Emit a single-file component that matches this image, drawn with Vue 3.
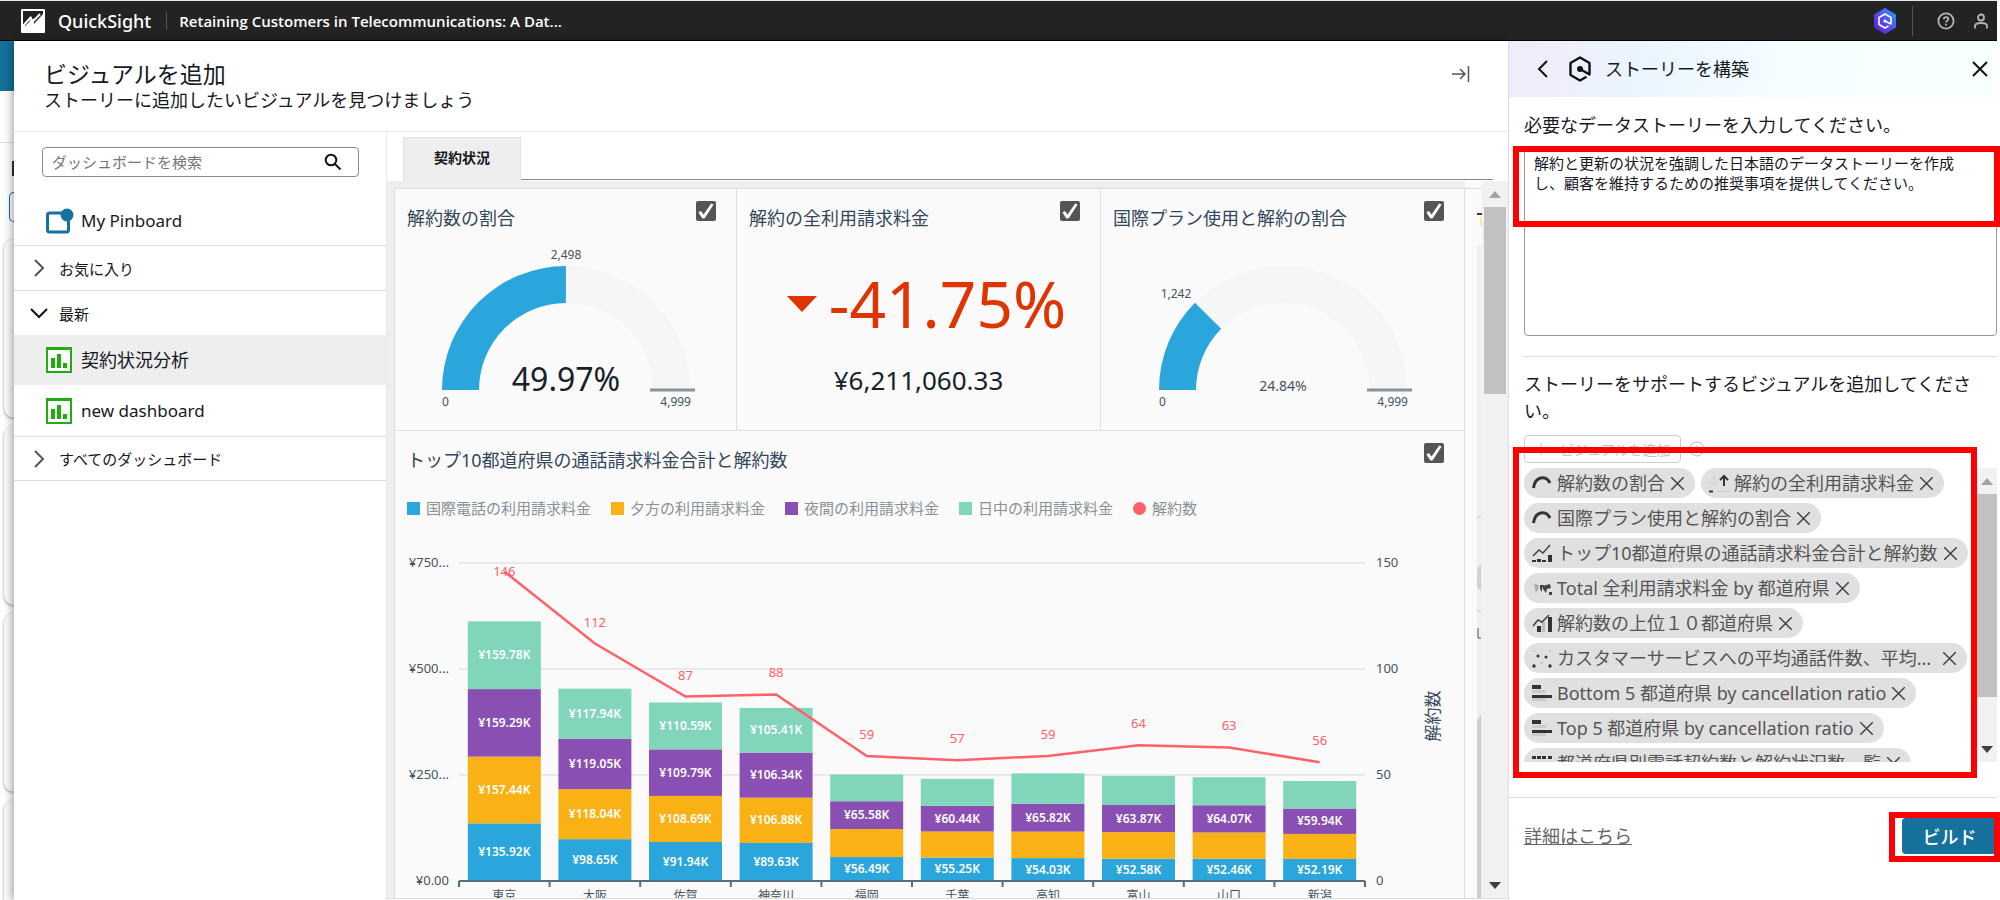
<script setup>
import { ref } from 'vue'

const prompt = ref('解約と更新の状況を強調した日本語のデータストーリーを作成し、顧客を維持するための推奨事項を提供してください。')
const search = ref('')
const picked = ref([true, true, true, true])

const colors = { intl: '#2aa6dd', evening: '#fab116', night: '#8a4fb3', day: '#80d5ba', line: '#ff6169' }

const legend = [
  { label: '国際電話の利用請求料金', color: 'intl' },
  { label: '夕方の利用請求料金', color: 'evening' },
  { label: '夜間の利用請求料金', color: 'night' },
  { label: '日中の利用請求料金', color: 'day' },
  { label: '解約数', color: 'line', round: true },
]

// Charges are in thousands of yen: international, evening, night, daytime.
const rows = [
  { name: '東京', v: [135.92, 157.44, 159.29, 159.78], churn: 146 },
  { name: '大阪', v: [98.65, 118.04, 119.05, 117.94], churn: 112 },
  { name: '佐賀', v: [91.94, 108.69, 109.79, 110.59], churn: 87 },
  { name: '神奈川', v: [89.63, 106.88, 106.34, 105.41], churn: 88 },
  { name: '福岡', v: [56.49, 66.1, 65.58, 63.2], churn: 59 },
  { name: '千葉', v: [55.25, 61.5, 60.44, 63.8], churn: 57 },
  { name: '高知', v: [54.03, 62.4, 65.82, 71.6], churn: 59 },
  { name: '富山', v: [52.58, 62.8, 63.87, 68.7], churn: 64 },
  { name: '山口', v: [52.46, 62.1, 64.07, 66.2], churn: 63 },
  { name: '新潟', v: [52.19, 58.9, 59.94, 64.8], churn: 56 },
]

const plot = { left: 64, right: 970, zero: 341, top: 23 }
const step = (plot.right - plot.left) / rows.length
const perK = (plot.zero - plot.top) / 750
const perChurn = (plot.zero - plot.top) / 150
const barWidth = 73
const keys = ['intl', 'evening', 'night', 'day']

const bars = rows.map((row, i) => {
  const cx = plot.left + step * (i + 0.5)
  let base = plot.zero
  const parts = row.v.map((value, k) => {
    const h = value * perK
    base -= h
    const shown = i < 4 || k === 0 || k === 2
    return { y: base, h, fill: colors[keys[k]], text: shown ? '¥' + value.toFixed(2) + 'K' : '' }
  })
  const py = plot.zero - row.churn * perChurn
  return { name: row.name, churn: row.churn, cx, parts, py, ly: i === 0 ? py + 5 : py - 17 }
})
const linePoints = bars.map((b) => b.cx + ',' + b.py).join(' ')
const ticks = rows.map((_, i) => plot.left + step * i).concat(plot.right)
const grid = [
  { left: '¥750...', right: '150', y: plot.top },
  { left: '¥500...', right: '100', y: plot.zero - 250 * 2 * perK },
  { left: '¥250...', right: '50', y: plot.zero - 250 * perK },
  { left: '¥0.00', right: '0', y: plot.zero },
]

// Ring segment of a half-circle gauge, from one fraction of the sweep to another.
function arc(from, to) {
  const cx = 135, cy = 150, ro = 124, ri = 87
  const pt = (r, f) => (cx - r * Math.cos(Math.PI * f)).toFixed(1) + ' ' + (cy - r * Math.sin(Math.PI * f)).toFixed(1)
  return `M${pt(ro, from)}A${ro} ${ro} 0 0 1 ${pt(ro, to)}L${pt(ri, to)}A${ri} ${ri} 0 0 0 ${pt(ri, from)}Z`
}

const cards = [
  { title: '解約数の割合', fraction: 0.4997, value: '2,498', vx: 135, vy: 19, percent: '49.97%', size: 'big' },
  { title: '解約の全利用請求料金' },
  { title: '国際プラン使用と解約の割合', fraction: 0.2484, value: '1,242', vx: 28, vy: 58, percent: '24.84%', size: 'small' },
]

const chips = [
  { icon: 'gauge', label: '解約数の割合' },
  { icon: 'kpi', label: '解約の全利用請求料金' },
  { icon: 'gauge', label: '国際プラン使用と解約の割合' },
  { icon: 'combo', label: 'トップ10都道府県の通話請求料金合計と解約数' },
  { icon: 'map', label: 'Total 全利用請求料金 by 都道府県' },
  { icon: 'bars', label: '解約数の上位１０都道府県' },
  { icon: 'scatter', label: 'カスタマーサービスへの平均通話件数、平均...', cut: true },
  { icon: 'hbar', label: 'Bottom 5 都道府県 by cancellation ratio' },
  { icon: 'hbar', label: 'Top 5 都道府県 by cancellation ratio' },
  { icon: 'table', label: '都道府県別電話契約数と解約状況数一覧' },
]
</script>

<template>
  <div class="app">
    <header class="topbar">
      <svg class="logo" viewBox="0 0 24 24" aria-hidden="true">
        <rect width="24" height="24" rx="1" fill="#fff" />
        <path d="M2 2H22V5L13 15L12.500 9L4 17H2Z" fill="#232323" />
        <path d="M2 17L10 8L9.500 15L19 5" fill="none" stroke="#fff" stroke-width="2" stroke-linejoin="bevel" />
      </svg>
      <span class="brand">QuickSight</span>
      <span class="rule"></span>
      <h1 class="doc">Retaining Customers in Telecommunications: A Dat...</h1>
      <button class="icon-btn q" aria-label="Amazon Q">
        <svg width="24" height="26" viewBox="0 0 24 26">
          <defs>
            <linearGradient id="qg" x1="0" y1="1" x2="1" y2="0">
              <stop offset="0" stop-color="#5a1fc4" />
              <stop offset="0.5" stop-color="#5b4bf0" />
              <stop offset="1" stop-color="#1aa0ff" />
            </linearGradient>
          </defs>
          <path d="M12 1L22 7V19L12 25L2 19V7Z" fill="url(#qg)" stroke="url(#qg)" stroke-width="2" stroke-linejoin="round" />
          <path d="M12 13L18 16V9.500L12 6L6 9.500V16.500L12 20L15.500 18" fill="none" stroke="#fff" stroke-width="1.600" stroke-linejoin="round" />
          <circle cx="12" cy="13" r="1.600" fill="#fff" />
        </svg>
      </button>
      <span class="rule tall"></span>
      <button class="icon-btn help" aria-label="Help">
        <svg width="18" height="18" viewBox="0 0 18 18" fill="none" stroke="#b4b4b4" stroke-width="1.800">
          <circle cx="9" cy="9" r="7.600" />
          <path d="M6.800 7.200C6.800 4.300 11.400 4.400 11.300 7.100C11.200 8.700 9 8.600 9 10.600" />
          <path d="M9 11.800V13.400" />
        </svg>
      </button>
      <button class="icon-btn user" aria-label="Account">
        <svg width="16" height="18" viewBox="0 0 16 18" fill="none" stroke="#b4b4b4" stroke-width="1.800">
          <circle cx="8" cy="5.500" r="3" />
          <path d="M2 16.500V14C2 10 14 10 14 14V16.500" />
        </svg>
      </button>
    </header>

    <div class="body">
      <div class="behind" aria-hidden="true">
        <div class="behind-bar"></div>
        <div class="behind-head"></div>
        <div class="behind-title"></div>
        <div class="behind-btn"></div>
        <div v-for="n in 4" :key="n" class="behind-card"></div>
      </div>

      <main class="picker">
        <div class="picker-head">
          <div>
            <h2>ビジュアルを追加</h2>
            <p>ストーリーに追加したいビジュアルを見つけましょう</p>
          </div>
          <button class="icon-btn" aria-label="閉じる">
            <svg width="20" height="20" viewBox="0 0 20 20" fill="none" stroke="#555" stroke-width="1.500">
              <path d="M1 10H14M9 5L14 10L9 15M17.500 2V18" />
            </svg>
          </button>
        </div>

        <div class="picker-body">
          <nav class="side">
            <div class="search">
              <input v-model="search" type="text" placeholder="ダッシュボードを検索" aria-label="ダッシュボードを検索" />
              <svg width="18" height="18" viewBox="0 0 18 18" fill="none" stroke="#111" stroke-width="2" aria-hidden="true">
                <circle cx="7" cy="7" r="5.300" />
                <path d="M11 11L16.500 16.500" />
              </svg>
            </div>
            <a href="#" class="entry pin">
              <svg width="28" height="26" viewBox="0 0 28 26" aria-hidden="true">
                <rect x="1.500" y="5" width="21" height="19" rx="2" fill="#fff" stroke="#16719c" stroke-width="3" />
                <circle cx="21" cy="7" r="6.500" fill="#16719c" />
              </svg>
              My Pinboard
            </a>
            <button class="group line">
              <svg width="18" height="18" viewBox="0 0 18 18"><path d="M5 1L13 9L5 17" /></svg>
              お気に入り
            </button>
            <button class="group">
              <svg class="open" width="18" height="18" viewBox="0 0 18 18"><path d="M1 5L9 13L17 5" /></svg>
              最新
            </button>
            <a v-for="(name, i) in ['契約状況分析', 'new dashboard']" :key="name" href="#" class="entry" :class="{ active: i === 0 }">
              <svg width="26" height="26" viewBox="0 0 26 26" aria-hidden="true">
                <rect x="1" y="1" width="24" height="24" fill="#fff" stroke="#1fae0b" stroke-width="2" />
                <path d="M0 0H26V3H0ZM5 11H9V21H5ZM11 7H15V21H11ZM17 16H21V21H17Z" fill="#1fae0b" />
              </svg>
              {{ name }}
            </a>
            <button class="group line top">
              <svg width="18" height="18" viewBox="0 0 18 18"><path d="M5 1L13 9L5 17" /></svg>
              すべてのダッシュボード
            </button>
          </nav>

          <section class="board">
            <div class="tabs">
              <button class="tab">契約状況</button>
              <span class="tab-line"></span>
            </div>
            <div class="view">
              <div class="sheet">
                <div class="cards">
                  <article v-for="(card, i) in cards" :key="card.title" class="card">
                    <label class="card-head">
                      <span>{{ card.title }}</span>
                      <input v-model="picked[i]" type="checkbox" />
                    </label>
                    <svg v-if="card.fraction" class="gauge" width="270" height="172" viewBox="0 0 270 172">
                      <path :d="arc(card.fraction, 1)" fill="#f5f7f7" />
                      <path :d="arc(0, card.fraction)" fill="#2aa6dd" />
                      <path d="M219 150H264" stroke="#87929b" stroke-width="3" />
                      <text :x="card.vx" :y="card.vy" text-anchor="middle">{{ card.value }}</text>
                      <text x="11" y="166">0</text>
                      <text x="260" y="166" text-anchor="end">4,999</text>
                      <text x="135" y="151" text-anchor="middle" :class="card.size">{{ card.percent }}</text>
                    </svg>
                    <div v-else class="kpi">
                      <div class="kpi-main">
                        <svg width="30" height="16" viewBox="0 0 30 16" aria-hidden="true"><path d="M0 0H30L15 16Z" fill="#e03400" /></svg>
                        -41.75%
                      </div>
                      <div class="kpi-sub">¥6,211,060.33</div>
                    </div>
                  </article>
                </div>
                <article class="wide">
                  <label class="card-head">
                    <span>トップ10都道府県の通話請求料金合計と解約数</span>
                    <input v-model="picked[3]" type="checkbox" />
                  </label>
                  <ul class="legend">
                    <li v-for="item in legend" :key="item.label">
                      <i :class="[item.color, { round: item.round }]"></i>{{ item.label }}
                    </li>
                  </ul>
                  <svg class="chart" viewBox="0 0 1069 372">
                    <g v-for="g in grid" :key="g.left">
                      <path :d="`M${plot.left} ${g.y}H${plot.right}`" stroke="#e8eaea" stroke-width="2" />
                      <text class="axis" x="54" :y="g.y + 4" text-anchor="end">{{ g.left }}</text>
                      <text class="axis" x="981" :y="g.y + 4">{{ g.right }}</text>
                    </g>
                    <g v-for="b in bars" :key="b.name">
                      <g v-for="(p, k) in b.parts" :key="k">
                        <rect :x="b.cx - barWidth / 2" :y="p.y" :width="barWidth" :height="p.h" :fill="p.fill" />
                        <text class="val" :x="b.cx" :y="p.y + p.h / 2 + 4" text-anchor="middle">{{ p.text }}</text>
                      </g>
                      <text class="place" :x="b.cx" y="360" text-anchor="middle">{{ b.name }}</text>
                    </g>
                    <path :d="`M${plot.left} ${plot.zero}H${plot.right}`" stroke="#5b6c7a" stroke-width="2" />
                    <path v-for="x in ticks" :key="x" :d="`M${x} ${plot.zero}V347`" stroke="#5b6c7a" stroke-width="2" />
                    <polyline :points="linePoints" fill="none" stroke="#ff6169" stroke-width="2.500" />
                    <text v-for="b in bars" :key="b.cx" class="churn" :x="b.cx" :y="b.ly" text-anchor="middle">{{ b.churn }}</text>
                    <text class="axis-title" transform="translate(1044 176) rotate(-90)" text-anchor="middle">解約数</text>
                  </svg>
                </article>
              </div>
              <div class="peek" aria-hidden="true">
                <svg width="5" height="711" viewBox="0 0 5 711">
                  <rect y="57" width="5" height="660" fill="#efefef" />
                  <rect y="24" width="5" height="2" fill="#333" />
                  <rect x="3" y="28" width="2" height="9" fill="#fbe3b4" />
                  <path d="M0 328H4M0 422H4" stroke="#dcdcdc" stroke-width="2" />
                  <path d="M0 380L4 375V402L0 398Z" fill="#cfd1d2" />
                  <path d="M1 439V449H4" fill="none" stroke="#555" stroke-width="1" />
                  <path d="M0 532L4 525V711H0Z" fill="#cbcdce" />
                </svg>
              </div>
              <div class="bar" aria-hidden="true">
                <i class="up"></i>
                <i class="thumb"></i>
                <i class="down"></i>
              </div>
            </div>
          </section>
        </div>
      </main>

      <aside class="story">
        <div class="story-head">
          <button class="icon-btn" aria-label="戻る">
            <svg width="12" height="18" viewBox="0 0 12 18" fill="none" stroke="#111" stroke-width="2"><path d="M10 1L2 9L10 17" /></svg>
          </button>
          <svg class="hex" width="24" height="26" viewBox="0 0 24 26" fill="none" stroke="#111" stroke-width="2.400" stroke-linejoin="round" aria-hidden="true">
            <path d="M12 13L21.500 18.500V7L12 1.500L2.500 7V19L12 24.500L18.500 20.800" />
            <circle cx="12" cy="13" r="1.800" fill="#111" />
          </svg>
          <h2>ストーリーを構築</h2>
          <button class="icon-btn close" aria-label="閉じる">
            <svg width="16" height="16" viewBox="0 0 16 16" fill="none" stroke="#111" stroke-width="2"><path d="M1 1L15 15M15 1L1 15" /></svg>
          </button>
        </div>

        <div class="field">
          <label for="prompt">必要なデータストーリーを入力してください。</label>
          <div class="mark-host">
            <textarea id="prompt" v-model="prompt" spellcheck="false"></textarea>
            <span class="mark prompt-mark"></span>
          </div>
        </div>

        <div class="support">
          <p>ストーリーをサポートするビジュアルを追加してください。</p>
          <div class="add">
            <button disabled>
              <svg width="12" height="12" viewBox="0 0 12 12" stroke="#c4c4c4" aria-hidden="true"><path d="M6 0V12M0 6H12" /></svg>
              ビジュアルを追加
            </button>
            <svg width="16" height="16" viewBox="0 0 16 16" fill="none" stroke="#b8b8b8" aria-hidden="true">
              <circle cx="8" cy="8" r="7" /><path d="M8 4V5.500M8 7V12" />
            </svg>
          </div>
        </div>

        <div class="mark-host chips-host">
          <ul class="chips">
            <li v-for="chip in chips" :key="chip.label" class="chip" :class="{ cut: chip.cut }">
              <svg width="20" height="20" viewBox="0 0 20 20" aria-hidden="true">
                <path v-if="chip.icon === 'gauge'" d="M1.500 15C3 3 14 2 18 10" fill="none" stroke="#333" stroke-width="3" />
                <g v-else-if="chip.icon === 'kpi'" fill="none">
                  <path d="M5 3V12M1 8L5 12L9 8M8 18.500H20" stroke="#ccc" />
                  <path d="M15 13V3M11 7L15 3L19 7" stroke="#333" stroke-width="2" />
                  <path d="M0 18.500H4" stroke="#333" stroke-width="2" />
                </g>
                <g v-else-if="chip.icon === 'combo'">
                  <path d="M1 13L7 7L11 10L18 2" fill="none" stroke="#444" stroke-width="1.500" />
                  <path d="M0 17H4V19H0ZM5 16H9V19H5ZM10 17H14V19H10ZM16 12H20V19H16Z" fill="#333" />
                </g>
                <g v-else-if="chip.icon === 'map'">
                  <path d="M2 6L7 7L6 11L4 15L3 10Z" fill="#aaa" />
                  <path d="M8 7H12L10 9V14L8 11ZM10 8L18 6L19 10L15 11L14 15L11 11ZM17 14H20V17H17Z" fill="#444" />
                </g>
                <g v-else-if="chip.icon === 'bars'">
                  <path d="M10 9H13V19H10Z" fill="#bbb" />
                  <path d="M1 13L6 7L10 9L17 2" fill="none" stroke="#444" stroke-width="1.500" />
                  <path d="M5 13H9V19H5ZM16 4H20V19H16Z" fill="#333" />
                </g>
                <g v-else-if="chip.icon === 'scatter'" fill="#333">
                  <circle cx="6" cy="8" r="1.500" /><circle cx="14" cy="9" r="1.500" />
                  <circle cx="2" cy="18" r="1.700" /><circle cx="18" cy="18" r="1.700" />
                  <path d="M1 2H3V4H1ZM17 2H19V4H17ZM8 14H11V16H8Z" fill="#ccc" />
                </g>
                <g v-else-if="chip.icon === 'hbar'">
                  <path d="M0 7H14V10H0ZM0 15H14V18H0Z" fill="#ccc" />
                  <path d="M0 2H9V6H0ZM0 12H20V15H0Z" fill="#333" />
                </g>
                <path v-else d="M0 3H4V6H0ZM5 3H9V6H5ZM10 3H14V6H10ZM16 3H20V6H16ZM0 9H20V11H0Z" fill="#333" />
              </svg>
              <span>{{ chip.label }}</span>
              <button class="icon-btn" :aria-label="chip.label + 'を削除'">
                <svg width="13" height="13" viewBox="0 0 13 13" fill="none" stroke="#444" stroke-width="1.500"><path d="M0 0L13 13M13 0L0 13" /></svg>
              </button>
            </li>
          </ul>
          <div class="bar" aria-hidden="true">
            <i class="up"></i>
            <i class="thumb"></i>
            <i class="down"></i>
          </div>
          <span class="mark chips-mark"></span>
        </div>

        <div class="foot">
          <a href="#">詳細はこちら</a>
          <div class="mark-host">
            <button class="build">ビルド</button>
            <span class="mark build-mark"></span>
          </div>
        </div>
      </aside>
    </div>
  </div>
</template>

<style>
body {
  margin: 0;
  overflow: hidden;
}
</style>

<style scoped>
.app {
  display: flex;
  flex-direction: column;
  height: 100vh;
  overflow: hidden;
  box-sizing: border-box;
  background: #fff;
  color: #16191f;
  font-family: "Noto Sans", "Noto Sans CJK JP", sans-serif;
  font-size: 18px;
  line-height: 24px;
}
.app *,
.app *::before {
  box-sizing: border-box;
}
h1,
h2,
p,
ul {
  margin: 0;
  padding: 0;
  font-weight: 400;
}
ul {
  list-style: none;
}
button,
input,
textarea {
  font-family: inherit;
  color: inherit;
}
button {
  border: 0;
  background: none;
  padding: 0;
}
a {
  color: inherit;
  text-decoration: none;
}
svg {
  display: block;
  flex: none;
}
.icon-btn {
  display: flex;
  align-items: center;
  flex: none;
}

.topbar {
  display: flex;
  align-items: center;
  flex: none;
  height: 41px;
  margin-right: 3px;
  padding: 0 8px 0 21px;
  background: #232323;
  border-top: 1px solid #dfe6e3;
  border-bottom: 1px solid #000;
  color: #fff;
}
.logo {
  width: 24px;
  height: 24px;
}
.brand {
  margin-left: 13px;
  font-size: 18px;
  font-weight: 500;
}
.rule {
  width: 1px;
  height: 18px;
  margin-left: 15px;
  background: #555;
}
.rule.tall {
  height: 30px;
}
.doc {
  flex: 1;
  margin-left: 12px;
  font-family: "Open Sans", "Noto Sans", sans-serif;
  font-size: 15px;
  font-weight: 600;
}
.help {
  margin-left: 24px;
}
.user {
  margin-left: 18px;
}

.body {
  display: flex;
  flex: 1;
  min-height: 0;
}
.behind {
  display: flex;
  flex-direction: column;
  flex: none;
  width: 14px;
  overflow: hidden;
}
.behind-bar {
  flex: none;
  height: 50px;
  background: #16719c;
}
.behind-head {
  flex: none;
  height: 52px;
  border-bottom: 1px solid #ddd;
}
.behind-title {
  flex: none;
  height: 15px;
  margin: 18px 0 16px 12px;
  background: #333;
}
.behind-btn {
  flex: none;
  height: 30px;
  margin: 0 0 17px 9px;
  border: 1px solid #0972b8;
  border-right: 0;
  border-radius: 5px 0 0 5px;
}
.behind-card {
  flex: none;
  height: 179px;
  margin: 0 0 8px 4px;
  border-radius: 10px 0 0 10px;
  background: #fafafa;
  box-shadow: 0 1px 3px #999;
}

.picker {
  position: relative;
  display: flex;
  flex-direction: column;
  flex: 1;
  min-width: 0;
  background: #fff;
  box-shadow: -2px 0 8px rgba(0, 0, 0, 0.35);
}
.picker-head {
  display: flex;
  justify-content: space-between;
  flex: none;
  height: 91px;
  padding: 19px 37px 0 30px;
  border-bottom: 1px solid #eaeaea;
}
.picker-head h2 {
  font-size: 23px;
  line-height: 28px;
}
.picker-head .icon-btn {
  height: 28px;
}
.picker-body {
  display: flex;
  flex: 1;
  min-height: 0;
}
.side {
  flex: none;
  width: 373px;
  border-right: 1px solid #eaeaea;
}
.search {
  display: flex;
  align-items: center;
  height: 30px;
  margin: 15px 27px 15px 28px;
  padding: 0 16px 0 9px;
  border: 1px solid #8c8c8c;
  border-radius: 4px;
}
.search input {
  flex: 1;
  min-width: 0;
  border: 0;
  outline: 0;
  padding: 0;
  background: none;
  font-size: 15px;
}
.search input::placeholder {
  color: #757575;
  opacity: 1;
}
.entry {
  display: flex;
  align-items: center;
  gap: 9px;
  height: 51px;
  padding-left: 32px;
  font-size: 17px;
}
.entry.active {
  height: 50px;
  background: #eee;
  font-size: 18px;
}
.entry.pin {
  height: 54px;
  gap: 7px;
  padding-top: 4px;
  border-bottom: 1px solid #e0e0e0;
}
.group {
  display: flex;
  align-items: center;
  gap: 11px;
  width: 100%;
  height: 44px;
  padding-left: 16px;
  font-size: 15px;
}
.group svg {
  fill: none;
  stroke: #555;
  stroke-width: 2;
}
.group svg.open {
  stroke: #111;
}
.group.line {
  height: 45px;
  border-bottom: 1px solid #ddd;
}
.group.top {
  border-top: 1px solid #ddd;
}

.board {
  display: flex;
  flex-direction: column;
  flex: 1;
  min-width: 0;
}
.tabs {
  display: flex;
  flex: none;
  height: 49px;
  padding: 5px 15px 0 16px;
}
.tab {
  width: 118px;
  height: 44px;
  padding-bottom: 6px;
  background: #eee;
  border: 1px solid #e0e3e3;
  border-bottom: 0;
  font-size: 14px;
  font-weight: 700;
}
.tab-line {
  flex: 1;
  margin-bottom: 1px;
  border-bottom: 1px solid #888;
}
.view {
  display: flex;
  flex: 1;
  min-height: 0;
  margin-bottom: 1px;
  background: #fafafa;
  border-bottom: 1px solid #ddd;
}
.sheet {
  flex: 1;
  min-width: 0;
  overflow: hidden;
  padding: 7px 0 0 7px;
  background: #eee;
}
.cards {
  display: grid;
  grid-template-columns: 343fr 364fr 364fr;
}
.card,
.wide {
  background: #fafafa;
  border: 1px solid #dedede;
}
.card {
  height: 243px;
}
.card + .card {
  border-left: 0;
}
.wide {
  border-top: 0;
}
.card-head {
  display: flex;
  justify-content: space-between;
  height: 51px;
  padding: 12px 20px 0 12px;
  color: #33475b;
}
.card-head span {
  padding-top: 5px;
}
.card-head input {
  appearance: none;
  width: 20px;
  height: 20px;
  margin: 0;
  border-radius: 2px;
  background: #555;
}
.card-head input:checked::before {
  content: "";
  display: block;
  width: 20px;
  height: 20px;
  background: #fff;
  clip-path: polygon(12% 58%, 24% 50%, 38% 68%, 76% 12%, 88% 18%, 44% 86%, 32% 88%);
}
.gauge {
  margin: 0 auto;
  font-size: 12px;
  fill: #44545f;
}
.gauge .big {
  font-size: 32px;
  fill: #16212b;
}
.gauge .small {
  font-size: 14px;
}
.kpi {
  display: flex;
  flex-direction: column;
  align-items: center;
}
.kpi-main {
  display: flex;
  align-items: center;
  gap: 12px;
  height: 128px;
  padding-left: 16px;
  color: #e03400;
  font-size: 64px;
}
.kpi-sub {
  color: #16212b;
  font-size: 26px;
}
.legend {
  display: flex;
  gap: 20px;
  margin: 14px 0 20px 12px;
  color: #879196;
  font-size: 15px;
}
.legend li {
  display: flex;
  align-items: center;
  gap: 6px;
}
.legend i {
  width: 13px;
  height: 13px;
}
.legend .round {
  border-radius: 50%;
}
.intl {
  background: #2aa6dd;
}
.evening {
  background: #fab116;
}
.night {
  background: #8a4fb3;
}
.day {
  background: #80d5ba;
}
.legend .line {
  background: #ff6169;
}
.chart {
  width: 100%;
  font-size: 12px;
}
.axis {
  fill: #44545f;
  font-size: 13px;
}
.place {
  fill: #44545f;
}
.axis-title {
  font-size: 17px;
  fill: #33475b;
}
.val {
  fill: #fff;
  font-weight: 600;
}
.churn {
  fill: #ff6169;
  font-size: 13px;
}
.peek {
  flex: none;
  width: 17px;
  margin-top: 7px;
  padding-left: 12px;
  overflow: hidden;
  border-top: 1px solid #dedede;
}
.bar {
  display: flex;
  flex-direction: column;
  align-items: center;
  flex: none;
  background: #f1f1f1;
}
.view .bar {
  width: 26px;
}
.up,
.down {
  flex: none;
  border: 6px solid transparent;
}
.up {
  margin-top: 4px;
  border-bottom: 7px solid #a3a3a3;
}
.down {
  margin: auto 0 3px;
  border-top: 7px solid #404040;
}
.thumb {
  flex: none;
  width: 22px;
  height: 187px;
  margin-top: 9px;
  background: #c1c1c1;
}

.story {
  position: relative;
  flex: none;
  width: 489px;
  margin-right: 3px;
  background: #fff;
  border-left: 1px solid #ddd;
}
.story-head {
  display: flex;
  align-items: center;
  height: 56px;
  padding: 0 9px 0 28px;
  background: linear-gradient(100deg, #f2ebf8, #eaf4ff 25%, #f6ffff 62%, #f8ffff);
}
.story-head h2 {
  font-size: 18px;
}
.hex {
  margin: 0 13px 0 19px;
}
.close {
  margin-left: auto;
}
.field {
  margin-left: 15px;
  padding: 16px 0 20px;
  border-bottom: 1px solid #ddd;
}
.field label {
  display: block;
  margin-bottom: 10px;
}
.mark-host {
  position: relative;
}
.mark {
  position: absolute;
  border: 6px solid #f00;
  pointer-events: none;
}
textarea {
  display: block;
  width: 100%;
  height: 189px;
  padding: 5px 36px 5px 9px;
  border: 1px solid #999;
  border-radius: 4px;
  outline: 0;
  resize: none;
  overflow: hidden;
  background: #fff;
  font-size: 15px;
  line-height: 20px;
}
.prompt-mark {
  inset: -1px -3px auto -11px;
  height: 81px;
}
.support {
  padding: 14px 16px 5px 15px;
}
.support p {
  line-height: 27px;
}
.add {
  display: flex;
  align-items: center;
  gap: 8px;
  margin-top: 10px;
}
.add button {
  display: flex;
  align-items: center;
  gap: 13px;
  height: 28px;
  padding: 0 9px 0 10px;
  border: 1px solid #ccc;
  border-radius: 4px;
  color: #c4c4c4;
  font-size: 14px;
}
.chips-host {
  display: flex;
  height: 294px;
}
.chips {
  display: flex;
  flex-wrap: wrap;
  align-content: flex-start;
  gap: 5px 6px;
  flex: 1;
  padding-left: 15px;
  overflow: hidden;
}
.chip {
  display: flex;
  align-items: center;
  height: 30px;
  padding: 0 11px 0 8px;
  border-radius: 15px;
  background: #e0e0e0;
  color: #555;
  white-space: nowrap;
}
.chip span {
  margin: 0 6px 0 5px;
}
.chip.cut span {
  margin-right: 12px;
}
.chips-host .bar {
  width: 21px;
}
.chips-host .thumb {
  height: 203px;
  width: 20px;
}
.chips-mark {
  inset: -21px 20px -16px 4px;
}
.foot {
  display: flex;
  justify-content: space-between;
  align-items: center;
  margin-top: 35px;
  padding: 20px 0 0 15px;
  border-top: 1px solid #ddd;
}
.foot a {
  color: #666;
  text-decoration: underline;
}
.build {
  display: block;
  width: 95px;
  height: 36px;
  border-radius: 4px;
  background: #16719c;
  color: #fff;
  font-size: 18px;
  font-weight: 500;
}
.build-mark {
  inset: -6px -3px -8px -13px;
}
</style>
